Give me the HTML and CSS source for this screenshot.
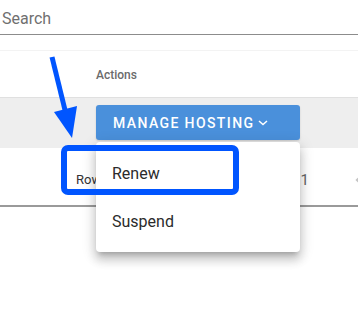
FILE: index.html
```html
<!DOCTYPE html>
<html>
<head>
<meta charset="utf-8">
<link rel="stylesheet" href="styles.css">
</head>
<body>
<div class="page">
  <div class="search"><span class="search-label">Search</span></div>
  <div class="table">
    <div class="head-row">
      <div class="cell-empty"></div>
      <div class="head-cell">Actions</div>
    </div>
    <div class="data-row">
      <div class="cell-empty"></div>
      <div class="action-cell">
        <button class="manage-btn">MANAGE HOSTING
          <svg class="chev" width="10" height="6" viewBox="0 0 10 6"><path d="M1 1 L5 4.6 L9 1" fill="none" stroke="#fff" stroke-width="1.5"/></svg>
        </button>
        <div class="menu">
          <div class="menu-item">Renew</div>
          <div class="menu-item">Suspend</div>
        </div>
      </div>
    </div>
    <div class="footer">
      <span class="rows-label">Rows per page:</span>
      <span class="range">1-1 of 1</span>
      <svg class="prev" width="12" height="14" viewBox="0 0 12 14"><path d="M9 1 L3 7 L9 13" fill="none" stroke="#c4c4c4" stroke-width="2.2"/></svg>
    </div>
  </div>
  <svg class="annot" width="358" height="326" viewBox="0 0 358 326">
    <line x1="52" y1="57" x2="65" y2="110" stroke="#0055ff" stroke-width="5"/>
    <polygon points="54,112 77,106 72,138" fill="#0055ff"/>
    <rect x="64" y="148" width="172" height="44" rx="4" fill="none" stroke="#0055ff" stroke-width="6"/>
  </svg>
</div>
</body>
</html>
```
FILE: styles.css
```css
html, body {
  margin: 0;
  padding: 0;
  background: #fff;
  overflow: hidden;
}
body {
  font-family: Roboto, "Liberation Sans", sans-serif;
}
.page {
  position: relative;
  width: 358px;
  height: 326px;
}
.search {
  border-bottom: 1px solid #8c8c8c;
  display: flex;
  align-items: center;
  padding-left: 2px;
  box-sizing: border-box;
  height: 35px;
}
.search-label {
  font-size: 16px;
  color: #707070;
  margin-top: 3px;
}
.table {
  margin-top: 15px;
}
.head-row {
  display: grid;
  grid-template-columns: 96px 1fr;
  height: 48px;
  border-top: 1px solid #f3f3f3;
  border-bottom: 1px solid #e0e0e0;
  box-sizing: border-box;
  align-items: center;
}
.head-cell {
  font-size: 12px;
  font-weight: 500;
  color: #6b6b6b;
  padding-top: 2px;
}
.data-row {
  display: grid;
  grid-template-columns: 96px 1fr;
  height: 50px;
  background: #eeeeee;
}
.action-cell {
  position: relative;
  padding-top: 7px;
}
.manage-btn {
  width: 204px;
  height: 35px;
  border: none;
  border-radius: 3px;
  background: #4a90db;
  color: #fff;
  font-family: Roboto, "Liberation Sans", sans-serif;
  font-size: 14px;
  font-weight: 500;
  letter-spacing: 1.4px;
  display: flex;
  align-items: center;
  padding: 0 0 0 17px;
  gap: 4px;
  box-shadow: 0 1px 2px rgba(0,0,0,0.15);
}
.chev {
  margin-top: 1px;
}
.menu {
  position: absolute;
  left: 0;
  top: 44px;
  width: 204px;
  background: #fff;
  border-radius: 4px;
  padding: 7px 0;
  z-index: 2;
  box-shadow: 0 5px 5px -3px rgba(0,0,0,0.2), 0 8px 10px 1px rgba(0,0,0,0.14), 0 3px 14px 2px rgba(0,0,0,0.12);
}
.menu-item {
  height: 48px;
  display: flex;
  align-items: center;
  padding-left: 16px;
  font-size: 16px;
  color: #2b2b2b;
}
.footer {
  height: 59px;
  border-bottom: 2px solid #9a9a9a;
  box-sizing: border-box;
  display: flex;
  align-items: center;
  padding-left: 76px;
  padding-top: 6px;
  font-size: 13px;
  color: #333;
}
.rows-label {
  flex: none;
}
.range {
  margin-left: auto;
  font-size: 15px;
  color: #666;
}
.prev {
  flex: none;
  margin-left: 45px;
  margin-right: -8px;
}
.annot {
  position: absolute;
  left: 0;
  top: 0;
  z-index: 5;
  pointer-events: none;
}
```
